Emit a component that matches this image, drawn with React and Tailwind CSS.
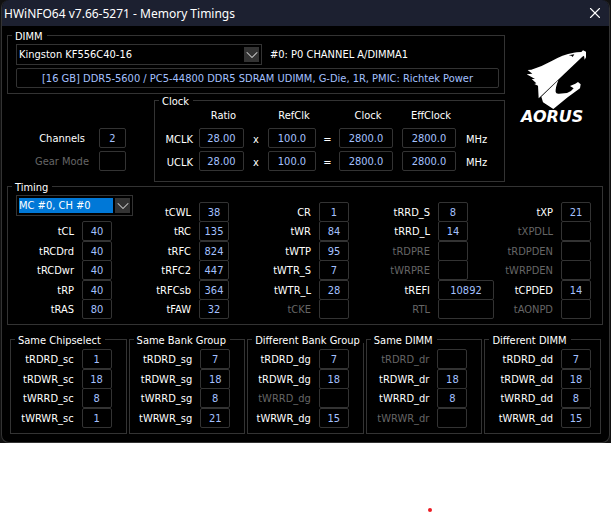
import { useState } from 'react';
import { ChevronDown, X } from 'lucide-react';
import clsx from 'clsx';

const TIMINGS = [
  [['tCL', '40'], ['tRCDrd', '40'], ['tRCDwr', '40'], ['tRP', '40'], ['tRAS', '80']],
  [['tCWL', '38'], ['tRC', '135'], ['tRFC', '824'], ['tRFC2', '447'], ['tRFCsb', '364'], ['tFAW', '32']],
  [['CR', '1'], ['tWR', '84'], ['tWTP', '95'], ['tWTR_S', '7'], ['tWTR_L', '28'], ['tCKE', '']],
  [['tRRD_S', '8'], ['tRRD_L', '14'], ['tRDPRE', ''], ['tWRPRE', ''], ['tREFI', '10892', true], ['RTL', '', true]],
  [['tXP', '21'], ['tXPDLL', ''], ['tRDPDEN', ''], ['tWRPDEN', ''], ['tCPDED', '14'], ['tAONPD', '']],
];

const TURNAROUNDS = [
  { title: 'Same Chipselect', rows: [['tRDRD_sc', '1'], ['tRDWR_sc', '18'], ['tWRRD_sc', '8'], ['tWRWR_sc', '1']] },
  { title: 'Same Bank Group', rows: [['tRDRD_sg', '7'], ['tRDWR_sg', '18'], ['tWRRD_sg', '8'], ['tWRWR_sg', '21']] },
  { title: 'Different Bank Group', rows: [['tRDRD_dg', '7'], ['tRDWR_dg', '18'], ['tWRRD_dg', ''], ['tWRWR_dg', '15']] },
  { title: 'Same DIMM', rows: [['tRDRD_dr', ''], ['tRDWR_dr', '18'], ['tWRRD_dr', '8'], ['tWRWR_dr', '']] },
  { title: 'Different DIMM', rows: [['tRDRD_dd', '7'], ['tRDWR_dd', '18'], ['tWRRD_dd', '8'], ['tWRWR_dd', '15']] },
];

const CLOCKS = [
  { name: 'MCLK', ratio: '28.00', ref: '100.0', clock: '2800.0', eff: '2800.0' },
  { name: 'UCLK', ratio: '28.00', ref: '100.0', clock: '2800.0', eff: '2800.0' },
];

function Group({ title, className, children }) {
  return (
    <fieldset className={clsx('min-w-0 border border-[#333]', className)}>
      <legend className="ml-1 h-2 pr-1 pl-[3px] leading-3 whitespace-nowrap">{title}</legend>
      {children}
    </fieldset>
  );
}

function Value({ className, ...props }) {
  return (
    <input
      readOnly
      className={clsx('h-5 min-w-0 rounded-xs border border-[#333] bg-black text-center text-[#a4c0ff] outline-none', className)}
      {...props}
    />
  );
}

function Field({ label, value, wide }) {
  return (
    <div className="flex h-5 items-center justify-end gap-2">
      <label htmlFor={label} className={clsx('pt-0.5 whitespace-nowrap', !value && 'text-[#666]')}>{label}</label>
      <Value id={label} value={value} className={clsx('shrink-0', wide ? '-mr-[26px] w-14' : 'w-[30px]')} />
    </div>
  );
}

function Dropdown({ label, options, highlighted, className }) {
  const [value, setValue] = useState(options[0]);
  return (
    <div className={clsx('relative h-[21px] border border-[#333] p-0.5', className)}>
      <select
        aria-label={label}
        value={value}
        onChange={(e) => setValue(e.target.value)}
        className={clsx('block h-full w-full appearance-none text-white outline-none', highlighted ? 'bg-[#0078d7]' : 'bg-black')}
      >
        {options.map((o) => <option key={o}>{o}</option>)}
      </select>
      <span className="pointer-events-none absolute inset-y-0.5 right-0.5 flex w-[17px] items-center justify-center border-l-2 border-black bg-[#333] text-[#ccc]">
        <ChevronDown className="h-5 w-5 shrink-0" strokeWidth={1.25} />
      </span>
    </div>
  );
}

function AorusLogo() {
  return (
    <svg viewBox="0 0 201 222" className="w-[67px] overflow-visible" role="img" aria-label="AORUS">
      <g fill="#fff">
        <path
          fillRule="evenodd"
          d="M53 148 L51 110 L40 105 L46 103 L32 90 L42 90 L17 76 L34 74 L20 63 L31 62 Q64 52 92 36 Q124 17 158 11 L167 10 L181 9 L186 4 L195 8 L195 25 L191 32 L189 20 L184 23 Z M143 19 L160 16 L155 24 L151 20 Z"
        />
        <path d="M61 143 L112 94 Q103 116 104 129 Q105 135 114 134 L138 132 L150 126 L158 118 L147 111 L163 104 L171 99 L179 106 L177 118 L140 145 L97 180 L66 160 Z" />
        <text x="0" y="218" className="font-['DejaVu_Sans'] text-[48px] font-bold italic">AORUS</text>
      </g>
    </svg>
  );
}

export default function App() {
  return (
    <div className="min-h-screen bg-white font-['DejaVu_Sans_Condensed','DejaVu_Sans',sans-serif] text-[11px] leading-3.5 text-white">
      <div className="bg-[#111] px-px">
        <main className="overflow-hidden rounded-lg border-x border-b border-[#333] bg-black pb-2">
          <header className="flex h-[26px] items-center justify-between bg-[#1c2030] pr-1 pl-0.5">
            <h1 className="pt-0.5 font-['Noto_Sans','Open_Sans',sans-serif] text-xs">HWiNFO64 v7.66-5271 - Memory Timings</h1>
            <button type="button" aria-label="Close" className="flex h-5 w-5 items-center justify-center">
              <X className="h-[18px] w-[18px]" strokeWidth={1.5} />
            </button>
          </header>

          <div className="mt-[5px] flex px-[5px]">
            <div className="w-[498px] shrink">
              <Group title="DIMM">
                <div className="space-y-[3px] px-2 pt-[5px] pr-[5px] pb-[5px]">
                  <div className="flex items-center gap-2">
                    <Dropdown label="DIMM" options={['Kingston KF556C40-16']} className="w-[246px]" />
                    <span>#0: P0 CHANNEL A/DIMMA1</span>
                  </div>
                  <Value
                    aria-label="Module description"
                    className="block w-full"
                    value="[16 GB] DDR5-5600 / PC5-44800 DDR5 SDRAM UDIMM, G-Die, 1R, PMIC: Richtek Power"
                  />
                </div>
              </Group>

              <div className="mt-0.5 flex">
                <div className="flex flex-1 flex-col items-end gap-[3px] pt-8 pr-7">
                  <div className="flex items-center gap-3.5">
                    <label htmlFor="channels" className="pt-0.5">Channels</label>
                    <Value id="channels" value="2" className="w-[27px]" />
                  </div>
                  <div className="flex items-center gap-2.5">
                    <label htmlFor="gear" className="pt-0.5 text-[#666]">Gear Mode</label>
                    <Value id="gear" value="" className="w-[27px]" />
                  </div>
                </div>

                <Group title="Clock" className="w-[351px]">
                  <table className="w-full table-fixed border-collapse text-center">
                    <thead>
                      <tr className="h-6 *:pl-1 *:font-normal">
                        <th className="w-11" />
                        <th className="w-[45px]">Ratio</th>
                        <th className="w-6" />
                        <th className="w-12">RefClk</th>
                        <th className="w-[23px]" />
                        <th className="w-[54px]">Clock</th>
                        <th className="w-[9px]" />
                        <th className="w-[54px]">EffClock</th>
                        <th />
                      </tr>
                    </thead>
                    <tbody>
                      {CLOCKS.map((c) => (
                        <tr key={c.name} className="h-[23px] align-top *:p-0">
                          <th className="font-normal"><div className="pt-[5px] pr-1.5 text-right">{c.name}</div></th>
                          <td><Value aria-label={`${c.name} ratio`} value={c.ratio} className="block w-full" /></td>
                          <td><div className="pt-[5px]">x</div></td>
                          <td><Value aria-label={`${c.name} reference clock`} value={c.ref} className="block w-full" /></td>
                          <td><div className="pt-[5px]">=</div></td>
                          <td><Value aria-label={`${c.name} clock`} value={c.clock} className="block w-full" /></td>
                          <td />
                          <td><Value aria-label={`${c.name} effective clock`} value={c.eff} className="block w-full" /></td>
                          <td><div className="pt-[5px] pl-2.5 text-left">MHz</div></td>
                        </tr>
                      ))}
                    </tbody>
                  </table>
                  <div className="h-[7px]" />
                </Group>
              </div>
            </div>

            <div className="flex flex-1 items-start justify-center pt-[18px]">
              <AorusLogo />
            </div>
          </div>

          <Group title="Timing" className="mr-1.5 ml-[5px]">
            <div className="grid grid-cols-[104fr_117fr_120fr_119fr_123fr] pr-[11px] pb-[5px]">
              {TIMINGS.map((rows, i) => (
                <div key={i} className="min-w-0">
                  {i === 0 ? (
                    <Dropdown label="Memory channel" options={['MC #0, CH #0']} highlighted className="my-[5px] ml-2 w-[117px]" />
                  ) : (
                    <div className="h-3" />
                  )}
                  <div className={i === 0 ? '*:nth-3:-mt-px *:nth-5:-mt-px' : '*:even:-mt-px'}>
                    {rows.map(([label, value, wide]) => (
                      <Field key={label} label={label} value={value} wide={wide} />
                    ))}
                  </div>
                </div>
              ))}
            </div>
          </Group>

          <div className="mt-2.5 mr-2 ml-2 grid grid-cols-5 gap-0.5">
            {TURNAROUNDS.map(({ title, rows }, i) => (
              <Group key={title} title={title}>
                <div className={clsx('pt-1.5 pb-[5px] *:nth-3:-mt-px', i === 4 ? 'pr-[9px]' : 'pr-3.5')}>
                  {rows.map(([label, value]) => (
                    <Field key={label} label={label} value={value} />
                  ))}
                </div>
              </Group>
            ))}
          </div>
        </main>
      </div>

      <div className="pt-[65px] pl-[70%]">
        <div className="h-1 w-1 rounded-full bg-[#ed1c24]" />
      </div>
    </div>
  );
}
